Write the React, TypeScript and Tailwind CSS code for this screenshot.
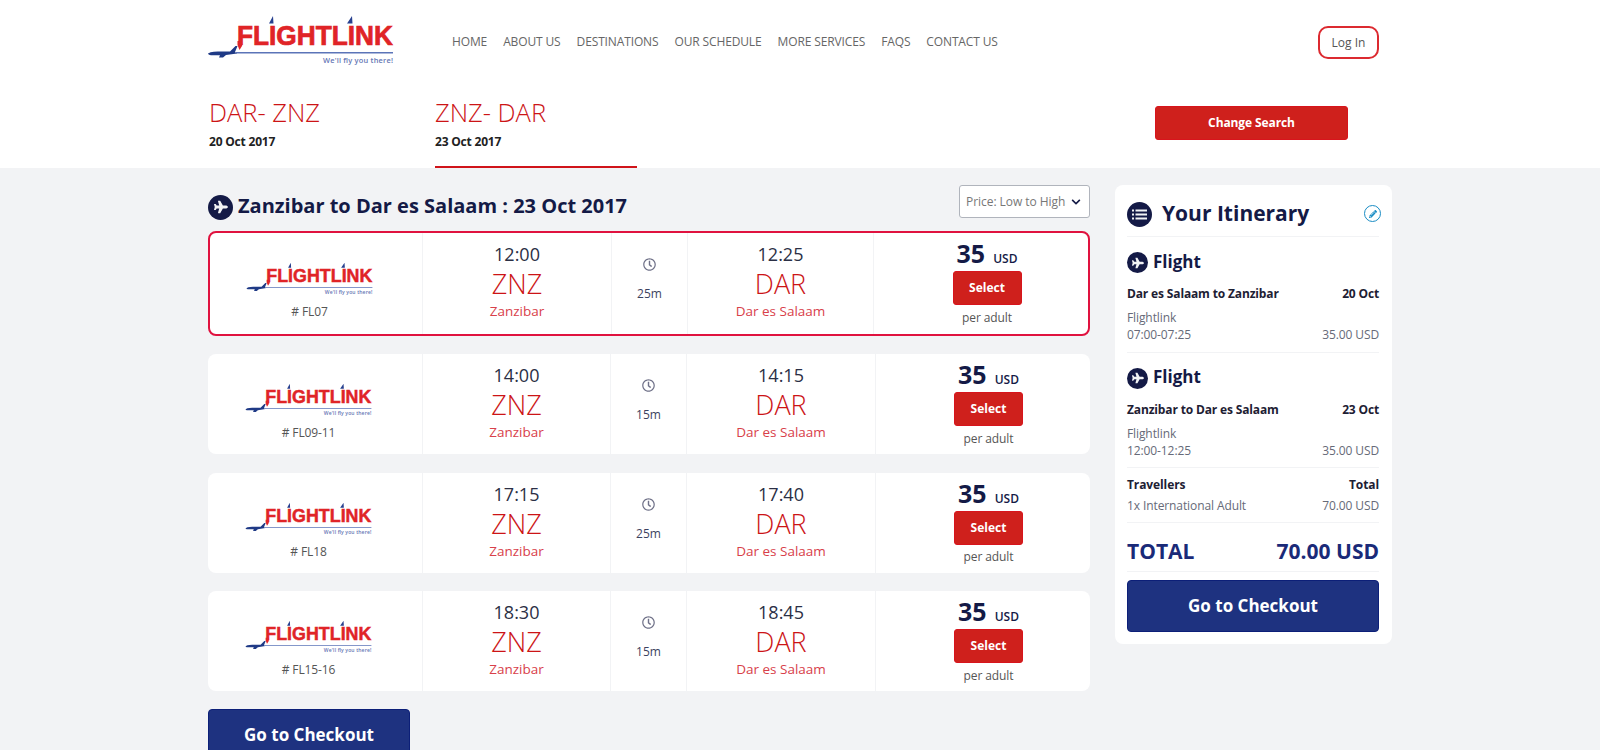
import { FaPlane, FaRegClock, FaPencilAlt, FaChevronDown } from 'react-icons/fa';

const NAV_ITEMS = ['Home', 'About Us', 'Destinations', 'Our Schedule', 'More Services', 'FAQs', 'Contact Us'];

const FLIGHTS = [
  { dep: '12:00', arr: '12:25', code: 'FL07', dur: '25m', selected: true },
  { dep: '14:00', arr: '14:15', code: 'FL09-11', dur: '15m', selected: false },
  { dep: '17:15', arr: '17:40', code: 'FL18', dur: '25m', selected: false },
  { dep: '18:30', arr: '18:45', code: 'FL15-16', dur: '15m', selected: false },
];

// Flightlink logo, drawn at 185x50 and scaled down for the cards
function Logo({ className }: { className: string }) {
  return (
    <svg viewBox="0 0 185 50" className={`overflow-visible ${className}`}>
      <text
        x="29"
        y="30"
        fontFamily="'Liberation Sans', sans-serif"
        fontWeight="700"
        fontSize="27"
        fill="#e02427"
        stroke="#e02427"
        strokeWidth="0.7"
        textLength="156"
        lengthAdjust="spacingAndGlyphs"
      >
        FLIGHTLINK
      </text>
      <path d="M29.5 26 H34 V31 L31.5 35 L29.5 30 Z" fill="#e02427" />
      <path d="M61 8.5 L65 1 L65.5 8.5 Z M139 8.5 L144 1 L144.5 8.5 Z" fill="#27408f" />
      <path d="M28 37 H185 V38.4 H28 Z" fill="#5b74b8" />
      <path
        d="M0 38.5 C3 36.5 8 36.5 14 36.5 L22 36.5 L27.5 31 L29.5 31 L27 37 L29 38.4 L18 40 L15 42.5 L11 42.5 L12 40.2 L3 40.2 C1 40 0 39.4 0 38.5 Z"
        fill="#1f3a86"
      />
      <text
        x="185"
        y="47.5"
        textAnchor="end"
        fontFamily="'Open Sans', sans-serif"
        fontWeight="600"
        fontSize="7.4"
        fill="#6476b4"
        textLength="70"
      >
        We'll fly you there!
      </text>
    </svg>
  );
}

function RoundPlane({ className, iconClass }: { className: string; iconClass: string }) {
  return (
    <span className={`flex shrink-0 items-center justify-center rounded-full bg-[#141a46] ${className}`}>
      <FaPlane className={`text-[#f2f3f5] ${iconClass}`} />
    </span>
  );
}

function ListIcon() {
  return (
    <span className="flex h-[25px] w-[25px] shrink-0 items-center justify-center rounded-full bg-[#141a46]">
      <svg viewBox="0 0 15 11" className="h-[11px] w-[15px]" fill="#f2f3f5">
        <rect x="0" y="0.5" width="2" height="2" />
        <rect x="0" y="4.5" width="2" height="2" />
        <rect x="0" y="8.5" width="2" height="2" />
        <rect x="3.5" y="0.5" width="11.5" height="2" />
        <rect x="3.5" y="4.5" width="11.5" height="2" />
        <rect x="3.5" y="8.5" width="11.5" height="2" />
      </svg>
    </span>
  );
}

function FlightCard({ dep, arr, code, dur, selected }: (typeof FLIGHTS)[number]) {
  return (
    <div
      className={`flex rounded-lg bg-white ${
        selected ? 'h-[104.5px] border-[2px] border-[#e0123f]' : 'h-[100px]'
      }`}
    >
      <div className={`flex flex-col items-center border-r border-[#f2f3f5] pt-[29px] pr-[13px] ${selected ? 'w-[213px]' : 'w-[215px]'}`}>
        <Logo className="h-[34px] w-[127px]" />
        <div className="mt-[6px] text-[12px] leading-[20px] tracking-[-0.1px] text-[#555]"># {code}</div>
      </div>
      <div className={`flex flex-col items-center border-r border-[#f2f3f5] pt-[10px] ${selected ? 'w-[189px]' : 'w-[188px]'}`}>
        <div className="text-[18px] leading-[22px] text-[#2b2f45]">{dep}</div>
        <div className="mt-[4px] text-[27px] leading-[30px] font-light text-[#cc1416]">ZNZ</div>
        <div className="mt-[2px] text-[13.5px] leading-[20px] text-[#d8404a]">Zanzibar</div>
      </div>
      <div className="flex w-[76px] flex-col items-center border-r border-[#f2f3f5] pt-[25px]">
        <FaRegClock className="h-[13px] w-[13px] text-[#6f7188]" />
        <div className="mt-[15px] text-[12px] leading-[16px] text-[#3c4260]">{dur}</div>
      </div>
      <div className={`flex flex-col items-center border-r border-[#f2f3f5] pt-[10px] ${selected ? 'w-[186px]' : 'w-[189px]'}`}>
        <div className="text-[18px] leading-[22px] text-[#2b2f45]">{arr}</div>
        <div className="mt-[4px] text-[27px] leading-[30px] font-light text-[#cc1416]">DAR</div>
        <div className="mt-[2px] text-[13.5px] leading-[20px] text-[#d8404a]">Dar es Salaam</div>
      </div>
      <div className={`flex flex-1 flex-col items-center pt-[3px] ${selected ? 'pl-[12px]' : 'pl-[11px]'}`}>
        <div className="flex h-[35px] items-baseline gap-[8px] leading-[35px]">
          <span className="text-[25px] font-bold text-[#141a46]">35</span>
          <span className="text-[12px] font-semibold text-[#141a46]">USD</span>
        </div>
        <button className="h-[34px] w-[69px] rounded-[3px] border border-[#d8141c] bg-[#cf201c] text-[12px] font-bold text-white">
          Select
        </button>
        <div className="mt-[3.5px] text-[12px] leading-[18px] tracking-[-0.1px] text-[#555]">per adult</div>
      </div>
    </div>
  );
}

function ItineraryFlight({ route, date, time }: { route: string; date: string; time: string }) {
  return (
    <div className="border-b border-[#f2f3f5] pt-[15px] pb-[8.5px]">
      <div className="flex h-[21px] items-center gap-[5px]">
        <RoundPlane className="h-[21px] w-[21px]" iconClass="h-[12px] w-[12px]" />
        <span className="pb-[3px] text-[17px] leading-[21px] font-bold text-[#141a46]">Flight</span>
      </div>
      <div className="mt-[11px] flex justify-between text-[12px] leading-[20px] font-bold tracking-[-0.15px] text-[#1d2033]">
        <span>{route}</span>
        <span>{date}</span>
      </div>
      <div className="mt-[5px] text-[12px] leading-[17px] tracking-[-0.1px] text-[#666a78]">Flightlink</div>
      <div className="flex justify-between text-[12px] leading-[17px] tracking-[-0.1px] text-[#666a78]">
        <span>{time}</span>
        <span>35.00 USD</span>
      </div>
    </div>
  );
}

function CheckoutButton({ className }: { className: string }) {
  return (
    <button className={`h-[52px] rounded-[4px] border border-[#0c1f78] bg-[#1e3280] text-[17px] font-bold text-white ${className}`}>
      Go to Checkout
    </button>
  );
}

export default function App() {
  return (
    <div className="h-screen overflow-hidden bg-[#f2f3f5] font-['Open_Sans',sans-serif]">
      {/* Header */}
      <div className="h-[168px] bg-white">
        <div className="mx-auto flex h-full w-[1184px] flex-col">
          <div className="flex h-[92px] shrink-0 items-start">
            <Logo className="mt-[15px] h-[50px] w-[185px] shrink-0" />
            <nav className="mt-[33px] ml-[59px] flex gap-[16px]">
              {NAV_ITEMS.map((item) => (
                <a key={item} className="text-[12px] leading-[18px] tracking-[-0.13px] text-[#666] uppercase">
                  {item}
                </a>
              ))}
            </nav>
            <button className="mt-[26px] mr-[13px] ml-auto h-[33px] w-[61px] rounded-[10px] border-[2px] border-[#dc2a30] text-[12px] text-[#555]">
              Log In
            </button>
          </div>
          <div className="flex flex-1">
            <div className="w-[227px] pt-[6px] pl-[1px]">
              <div className="text-[25.5px] leading-[28px] font-light text-[#cc1416]">DAR- ZNZ</div>
              <div className="mt-[8px] text-[12px] leading-[16px] font-bold tracking-[-0.2px] text-[#222]">20 Oct 2017</div>
            </div>
            <div className="w-[202px] border-b-[2px] border-[#d0141a] pt-[6px]">
              <div className="text-[25.5px] leading-[28px] font-light text-[#cc1416]">ZNZ- DAR</div>
              <div className="mt-[8px] text-[12px] leading-[16px] font-bold tracking-[-0.2px] text-[#222]">23 Oct 2017</div>
            </div>
            <button className="mt-[14px] mr-[44px] ml-auto h-[34px] w-[193px] rounded-[3px] border border-[#d8141c] bg-[#cf201c] text-[12px] font-bold tracking-[-0.1px] text-white">
              Change Search
            </button>
          </div>
        </div>
      </div>

      {/* Main */}
      <div className="mx-auto flex w-[1184px] items-start gap-[25px] pt-[17px]">
        <div className="w-[882px] shrink-0">
          <div className="flex h-[46px] items-start justify-between">
            <div className="mt-[8px] flex items-center gap-[5px]">
              <RoundPlane className="h-[25px] w-[25px]" iconClass="h-[14px] w-[14px]" />
              <h1 className="pb-[3px] text-[20px] leading-[25px] font-bold text-[#141a46]">
                Zanzibar to Dar es Salaam : 23 Oct 2017
              </h1>
            </div>
            <div className="flex h-[33px] w-[131px] items-center justify-between rounded-[3px] border border-[#b0b4bc] bg-white pr-[8px] pl-[6px]">
              <span className="text-[12px] tracking-[-0.05px] text-[#777]">Price: Low to High</span>
              <FaChevronDown className="h-[10px] w-[10px] text-[#141a46]" />
            </div>
          </div>
          <div className="flex flex-col gap-[18.5px]">
            {FLIGHTS.map((f) => (
              <FlightCard key={f.code} {...f} />
            ))}
          </div>
          <CheckoutButton className="mt-[18px] w-[202px]" />
        </div>

        {/* Itinerary sidebar */}
        <div className="w-[277px] shrink-0 rounded-lg bg-white pt-[17px] pr-[13px] pb-[12.5px] pl-[12px]">
          <div className="flex h-[35px] items-start border-b border-[#f2f3f5]">
            <ListIcon />
            <span className="ml-[10px] text-[21px] leading-[23px] font-bold text-[#141a46]">Your Itinerary</span>
            <span className="mt-[3px] mr-[-2px] ml-auto flex h-[17px] w-[17px] items-center justify-center rounded-full border-[1.5px] border-[#1a8cc4]">
              <FaPencilAlt className="h-[8px] w-[8px] text-[#1a8cc4]" />
            </span>
          </div>
          <ItineraryFlight route="Dar es Salaam to Zanzibar" date="20 Oct" time="07:00-07:25" />
          <ItineraryFlight route="Zanzibar to Dar es Salaam" date="23 Oct" time="12:00-12:25" />
          <div className="border-b border-[#f2f3f5] pt-[8px] pb-[8px]">
            <div className="flex justify-between text-[12px] leading-[17px] font-bold tracking-[-0.1px] text-[#1d2033]">
              <span>Travellers</span>
              <span>Total</span>
            </div>
            <div className="mt-[4px] flex justify-between text-[12px] leading-[17px] tracking-[-0.1px] text-[#666a78]">
              <span>1x International Adult</span>
              <span>70.00 USD</span>
            </div>
          </div>
          <div className="flex justify-between border-b border-[#f2f3f5] pt-[13px] pb-[5px] text-[21px] leading-[30px] font-bold text-[#1a2a78]">
            <span>TOTAL</span>
            <span>70.00 USD</span>
          </div>
          <CheckoutButton className="mt-[7.5px] w-full" />
        </div>
      </div>
    </div>
  );
}
